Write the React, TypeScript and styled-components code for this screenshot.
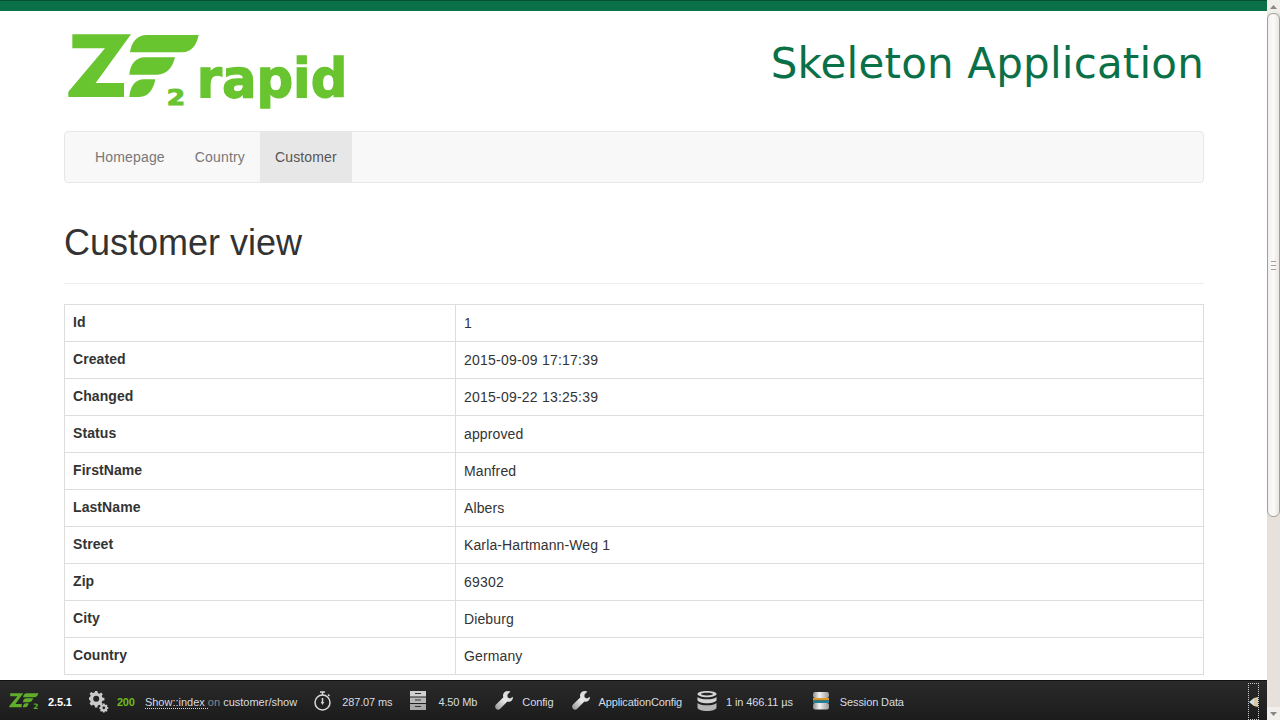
import React from "react";
import styled, { createGlobalStyle } from "styled-components";

const GlobalStyle = createGlobalStyle`
  html, body {
    margin: 0;
    height: 100%;
    overflow: hidden;
    background: #fff;
    font-family: "Liberation Sans", Arial, sans-serif;
    font-size: 14px;
    line-height: 20px;
    color: #333;
  }
`;

const Shell = styled.div`
  display: flex;
  height: 720px;
  overflow: hidden;
`;

const Main = styled.div`
  flex: 1;
  min-width: 0;
  overflow: hidden;
`;

const TopBar = styled.div`
  height: 10px;
  background: #0a7047;
  border-top: 1px solid #075234;
`;

const Container = styled.div`
  padding: 0 63px 0 64px;
`;

const Header = styled.header`
  display: flex;
  justify-content: space-between;
  align-items: flex-start;
  height: 120px;
  padding-top: 19px;
  box-sizing: border-box;
`;

const LogoSvg = styled.svg`
  display: block;
  width: 310px;
  height: 90px;
`;

const SiteTitle = styled.div`
  font-family: "DejaVu Sans", Verdana, sans-serif;
  font-size: 42px;
  letter-spacing: 0.18px;
  line-height: 68px;
  color: #0a7047;
`;

const Navbar = styled.nav`
  display: flex;
  height: 50px;
  padding-left: 15px;
  background: #f8f8f8;
  border: 1px solid #e7e7e7;
  border-radius: 4px;
`;

const NavLink = styled.a<{ $active?: boolean }>`
  padding: 15px;
  letter-spacing: 0.16px;
  color: ${(p) => (p.$active ? "#555" : "#777")};
  background: ${(p) => (p.$active ? "#e7e7e7" : "transparent")};
`;

const PageHeader = styled.div`
  margin: 40px 0 20px;
  padding-bottom: 10px;
  border-bottom: 1px solid #eee;
`;

const Title = styled.h1`
  margin: 0;
  font-size: 36px;
  line-height: 40px;
  font-weight: 500;
  color: #333;
  height: 50px;
`;

const Table = styled.table`
  width: 100%;
  border-collapse: collapse;
  border-spacing: 0;
  table-layout: fixed;
`;

const LabelCell = styled.th`
  width: 374px;
  padding: 7px 8px 9px;
  border: 1px solid #ddd;
  text-align: left;
  font-weight: 700;
  letter-spacing: 0.08px;
  vertical-align: top;
`;

const ValueCell = styled.td<{ $numeric?: boolean }>`
  padding: 8px;
  border: 1px solid #ddd;
  letter-spacing: ${(p) => (p.$numeric ? "0.22px" : "0.12px")};
  vertical-align: top;
`;

const Scrollbar = styled.div`
  display: flex;
  flex-direction: column;
  flex: 0 0 13px;
  background: #e6e1db;
`;

const ScrollButton = styled.div`
  display: flex;
  align-items: center;
  justify-content: center;
  height: 13px;
  background: #f1efec;
  color: #8b8780;
`;

const ScrollThumb = styled.div`
  display: flex;
  align-items: center;
  justify-content: center;
  height: 504px;
  box-sizing: border-box;
  background: linear-gradient(90deg, #f3f1ef, #fbfafa 50%, #e9e6e2);
  border: 1px solid #a5a097;
  border-radius: 6px;
`;

const Grip = styled.div`
  width: 5px;
  height: 7px;
  border-top: 1px solid #a5a097;
  border-bottom: 1px solid #a5a097;
  background: linear-gradient(#a5a097, #a5a097) center / 100% 1px no-repeat;
`;

const ScrollSpacer = styled.div`
  flex: 1;
`;

const Toolbar = styled.div`
  position: fixed;
  left: 0;
  right: 13px;
  bottom: 0;
  display: flex;
  align-items: center;
  height: 40px;
  padding: 2px 0 0 9px;
  box-sizing: border-box;
  background: linear-gradient(#2a2a2a, #1c1c1c);
  border-top: 1px solid #111;
  font-size: 11px;
  letter-spacing: -0.12px;
  color: #d6dde2;
`;

const Entry = styled.div<{ $left?: number; $gap?: number }>`
  display: flex;
  align-items: center;
  gap: ${(p) => p.$gap ?? 9}px;
  margin-left: ${(p) => p.$left ?? 0}px;
  white-space: nowrap;
  svg {
    margin-top: -2px;
    overflow: visible;
  }
`;

const Version = styled.span`
  font-weight: 700;
  color: #fff;
`;

const Status = styled.span`
  font-weight: 700;
  color: #6fbb1c;
`;

const RouteText = styled.span`
  margin-left: 1px;
  letter-spacing: 0;
`;

const Route = styled.span`
  border-bottom: 1px dotted #d6dde2;
  line-height: 12px;
`;

const Muted = styled.span`
  color: #888;
`;

const Hide = styled.div`
  position: absolute;
  top: 2px;
  right: 8px;
  display: flex;
  align-items: center;
  justify-content: center;
  width: 11px;
  height: 37px;
  box-sizing: border-box;
  border: 1px dotted #ccc;
`;

const rows: [string, string, boolean?][] = [
  ["Id", "1"],
  ["Created", "2015-09-09 17:17:39", true],
  ["Changed", "2015-09-22 13:25:39", true],
  ["Status", "approved"],
  ["FirstName", "Manfred"],
  ["LastName", "Albers"],
  ["Street", "Karla-Hartmann-Weg 1"],
  ["Zip", "69302", true],
  ["City", "Dieburg"],
  ["Country", "Germany"],
];

const ZfMark = () => (
  <>
    <path d="M67 103H243L137 249H222V291H55V275L165 145H67Z" />
    <path d="M240 157C244 125 262 105 290 105H446C440 135 424 157 396 157Z" />
    <path d="M238 224C240 192 258 172 285 172H375C368 202 350 224 322 224Z" />
    <path d="M238 291C240 259 256 238 282 238H316C310 268 296 291 268 291Z" />
  </>
);

const Logo = () => (
  <LogoSvg viewBox="42 90 930 270" fill="#68c42f">
    <ZfMark />
    <text
      x="350"
      y="314"
      fontFamily="'DejaVu Sans', sans-serif"
      fontWeight="700"
      fontSize="62"
      textLength="55"
      lengthAdjust="spacingAndGlyphs"
      stroke="#68c42f"
      strokeWidth="3"
    >
      2
    </text>
    <text
      x="440"
      y="291"
      fontFamily="'DejaVu Sans', sans-serif"
      fontWeight="700"
      fontSize="162"
      textLength="452"
      lengthAdjust="spacingAndGlyphs"
      stroke="#68c42f"
      strokeWidth="4"
    >
      rapid
    </text>
  </LogoSvg>
);

const ToolbarLogo = () => (
  <svg width="30" height="16" viewBox="55 100 395 215" fill="#5fae2b">
    <ZfMark />
    <text x="378" y="318" fontFamily="'DejaVu Sans', sans-serif" fontWeight="700" fontSize="100">
      2
    </text>
  </svg>
);

const GearsIcon = () => (
  <svg width="19" height="20" viewBox="0 0 19 20" fill="#c9c9c9">
    <path d="M6 0h2.400l.4 2 1.600.7L12.100 1.600l1.700 1.700-1.100 1.700.7 1.600 2 .4v2.400l-2 .4-.7 1.600 1.100 1.700-1.700 1.700-1.700-1.100-1.600.7-.4 2H6l-.4-2-1.600-.7-1.700 1.100L.6 12.500l1.100-1.700L1 9.200l-1-.4V6.400l1-.4.700-1.600L.6 2.700 2.300 1l1.700 1.100 1.600-.7ZM7.200 4.800a3 3 0 1 0 0 6 3 3 0 0 0 0-6Z" fillRule="evenodd" />
    <path d="M14 12.500h1.600l.2 1 .8.400.9-.5 1 1-.5.900.3.800 1 .2v1.500l-1 .2-.3.800.5.900-1 1-.9-.5-.8.300-.2 1H14l-.2-1-.8-.3-.9.500-1-1 .5-.9-.3-.8-1-.2v-1.500l1-.2.300-.8-.5-.9 1-1 .9.500.8-.400ZM14.800 15.400a1.400 1.400 0 1 0 0 2.800 1.400 1.400 0 0 0 0-2.800Z" fillRule="evenodd" />
  </svg>
);

const WatchIcon = () => (
  <svg width="17" height="20" viewBox="0 0 17 20" fill="none" stroke="#d8d8d8">
    <circle cx="8.500" cy="11.500" r="7.500" strokeWidth="1.500" />
    <path d="M6 1h5M8.500 1v3M14 3.500l1.500 1.500" strokeWidth="1.500" />
    <path d="M8.500 7v5" strokeWidth="1.500" />
    <path d="M6.800 11h3.400l-1.700 3Z" fill="#d8d8d8" stroke="none" />
  </svg>
);

const DrawersIcon = () => (
  <svg width="16" height="19" viewBox="0 0 16 19">
    <rect y="0" width="16" height="5.500" fill="#d0d0d0" />
    <rect y="6.500" width="16" height="5.500" fill="#b8b8b8" />
    <rect y="13" width="16" height="6" fill="#a8a8a8" />
    <path d="M5 2.500h6M5 9h6M5 15.500h6" stroke="#333" strokeWidth="1.200" />
  </svg>
);

const WrenchIcon = ({ id }: { id: string }) => (
  <svg width="18" height="19" viewBox="0 0 18 19">
    <defs>
      <linearGradient id={id} x1="0" y1="1" x2="1" y2="0">
        <stop offset="0" stopColor="#8f8f8f" />
        <stop offset="0.5" stopColor="#e8e8e8" />
        <stop offset="1" stopColor="#cfcfcf" />
      </linearGradient>
    </defs>
    <path
      d="M13 0c-3 0-5 2-5 4.500 0 .8.200 1.300.4 1.800L1 13.500c-1.300 1.300-1 3.200 0 4.300 1.100 1.100 3 1.300 4.200 0l7.200-7.400c.6.200 1 .3 1.600.3 2.500 0 4-2.200 4-5l-3 1.800-2.500-1.200V3.500L15.500.5C14.800.2 14 0 13 0Z"
      fill={`url(#${id})`}
    />
  </svg>
);

const DatabaseIcon = () => (
  <svg width="20" height="20" viewBox="0 0 20 20" fill="#d4d4d4">
    <path d="M10 0c5 0 9.500 1.200 9.500 3s-4.500 3.200-9.500 3.200S.5 4.800.5 3 5 0 10 0Zm0 1.700C6.500 1.700 4 2.300 4 3s2.500 1.500 6 1.500S16 3.700 16 3s-2.500-1.300-6-1.300Z" fillRule="evenodd" />
    <path d="M.5 6c1.500 1.500 5 2.300 9.500 2.300S18 7.500 19.500 6v3c0 1.800-4.500 3.200-9.500 3.200S.5 10.800.5 9Z" />
    <path d="M.5 12c1.500 1.500 5 2.300 9.500 2.300s8-.8 9.500-2.300v4.500C19.500 18.500 15 20 10 20S.5 18.500.5 16.500Z" fill="#b5b5b5" />
  </svg>
);

const SessionIcon = () => (
  <svg width="16" height="19" viewBox="0 0 16 19">
    <defs>
      <linearGradient id="sessionMetal" x1="0" y1="0" x2="1" y2="0">
        <stop offset="0" stopColor="#8d8d8d" />
        <stop offset="0.4" stopColor="#f2f2f2" />
        <stop offset="1" stopColor="#9a9a9a" />
      </linearGradient>
    </defs>
    <rect y="1" width="16" height="6" rx="2" fill="url(#sessionMetal)" />
    <rect y="7" width="16" height="2.500" fill="#d99a2b" />
    <rect y="9.500" width="16" height="2.500" fill="#1f7f9a" />
    <rect y="12" width="16" height="6.500" rx="2" fill="url(#sessionMetal)" />
  </svg>
);

const App = () => (
  <Shell>
    <GlobalStyle />
    <Main>
      <TopBar />
      <Container>
        <Header>
          <Logo />
          <SiteTitle>Skeleton Application</SiteTitle>
        </Header>
        <Navbar>
          <NavLink>Homepage</NavLink>
          <NavLink>Country</NavLink>
          <NavLink $active>Customer</NavLink>
        </Navbar>
        <PageHeader>
          <Title>Customer view</Title>
        </PageHeader>
        <Table>
          <tbody>
            {rows.map(([label, value, numeric]) => (
              <tr key={label}>
                <LabelCell>{label}</LabelCell>
                <ValueCell $numeric={numeric}>{value}</ValueCell>
              </tr>
            ))}
          </tbody>
        </Table>
      </Container>
    </Main>
    <Scrollbar>
      <ScrollButton>
        <svg width="7" height="4" viewBox="0 0 7 4" fill="currentColor">
          <path d="M3.500 0 7 4H0Z" />
        </svg>
      </ScrollButton>
      <ScrollThumb>
        <Grip />
      </ScrollThumb>
      <ScrollSpacer />
      <ScrollButton>
        <svg width="7" height="4" viewBox="0 0 7 4" fill="currentColor">
          <path d="M0 0h7L3.500 4Z" />
        </svg>
      </ScrollButton>
    </Scrollbar>
    <Toolbar>
      <Entry>
        <ToolbarLogo />
        <Version>2.5.1</Version>
      </Entry>
      <Entry $left={17}>
        <GearsIcon />
        <Status>200</Status>
        <RouteText>
          <Route>Show::index </Route>
          <Muted>on</Muted> customer/show
        </RouteText>
      </Entry>
      <Entry $left={17} $gap={11}>
        <WatchIcon />
        287.07 ms
      </Entry>
      <Entry $left={18} $gap={12}>
        <DrawersIcon />
        4.50 Mb
      </Entry>
      <Entry $left={18}>
        <WrenchIcon id="wrenchA" />
        Config
      </Entry>
      <Entry $left={19} $gap={8}>
        <WrenchIcon id="wrenchB" />
        ApplicationConfig
      </Entry>
      <Entry $left={15}>
        <DatabaseIcon />
        1 in 466.11 µs
      </Entry>
      <Entry $left={20} $gap={11}>
        <SessionIcon />
        Session Data
      </Entry>
      <Hide>
        <svg width="9" height="10" viewBox="0 0 9 10">
          <path d="M0 5 5 1v8Z" fill="#cfe0ef" />
          <path d="M5 1 9 0v10L5 9Z" fill="#d8c9a0" />
        </svg>
      </Hide>
    </Toolbar>
  </Shell>
);

export default App;
